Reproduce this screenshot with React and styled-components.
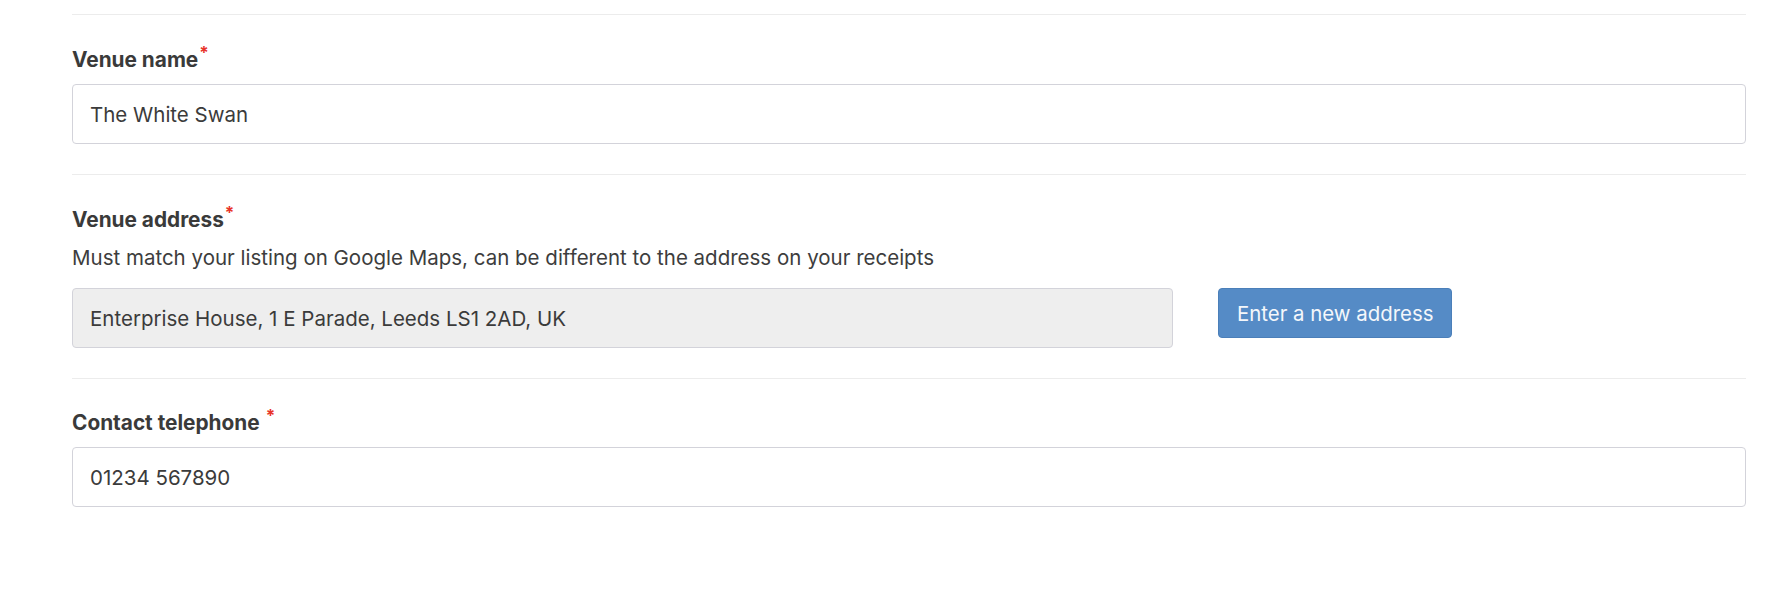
import React from "react";
import styled, { createGlobalStyle } from "styled-components";

const Global = createGlobalStyle`
  html, body { margin: 0; padding: 0; background: #ffffff; }
  body { font-family: Inter, "Noto Sans", "Liberation Sans", sans-serif; color: #3a3a3a; }
  * { box-sizing: border-box; }
`;

const Page = styled.div`
  padding: 14px 46px 0 72px;
`;

const Section = styled.section`
  border-top: 1px solid #ececec;
  padding: ${(p) => (p.$tight ? "30px" : "31px")} 0 30px;
`;

const Label = styled.label`
  display: block;
  font-size: 20.8px;
  line-height: 28px;
  font-weight: 700;
  color: #3a3a3a;
  margin-bottom: 9px;
`;

const Required = styled.span`
  color: #e8342a;
  font-size: 17px;
  font-weight: 700;
  position: relative;
  top: -8px;
  margin-left: ${(p) => (p.$spaced ? "6px" : "1px")};
`;

const Help = styled.p`
  margin: 0 0 16px;
  font-size: 20.5px;
  line-height: 28px;
  color: #3d3d3d;
`;

const Input = styled.input`
  display: block;
  width: 100%;
  height: 60px;
  padding: 0 17px;
  border: 1px solid #d3d3da;
  border-radius: 4px;
  background: ${(p) => (p.disabled ? "#eeeeee" : "#ffffff")};
  font-family: inherit;
  font-size: 20.5px;
  color: #3b3b3b;
  outline: none;
  &:disabled { color: #3b3b3b; -webkit-text-fill-color: #3b3b3b; opacity: 1; }
`;

const AddressRow = styled.div`
  display: grid;
  grid-template-columns: 1101px auto;
  column-gap: 45px;
  align-items: start;
`;

const Button = styled.button`
  justify-self: start;
  height: 50px;
  padding: 0 18px;
  border: 1px solid #4b7fb9;
  border-radius: 4px;
  background: #558bc6;
  color: #f4f7fb;
  font-family: inherit;
  font-size: 20.4px;
  cursor: pointer;
`;

export default function App() {
  return (
    <>
      <Global />
      <Page>
        <Section>
          <Label>
            Venue name<Required>*</Required>
          </Label>
          <Input defaultValue="The White Swan" />
        </Section>
        <Section>
          <Label>
            Venue address<Required>*</Required>
          </Label>
          <Help>
            Must match your listing on Google Maps, can be different to the address on your receipts
          </Help>
          <AddressRow>
            <Input disabled defaultValue="Enterprise House, 1 E Parade, Leeds LS1 2AD, UK" />
            <Button type="button">Enter a new address</Button>
          </AddressRow>
        </Section>
        <Section $tight>
          <Label>
            Contact telephone<Required $spaced>*</Required>
          </Label>
          <Input defaultValue="01234 567890" />
        </Section>
      </Page>
    </>
  );
}
